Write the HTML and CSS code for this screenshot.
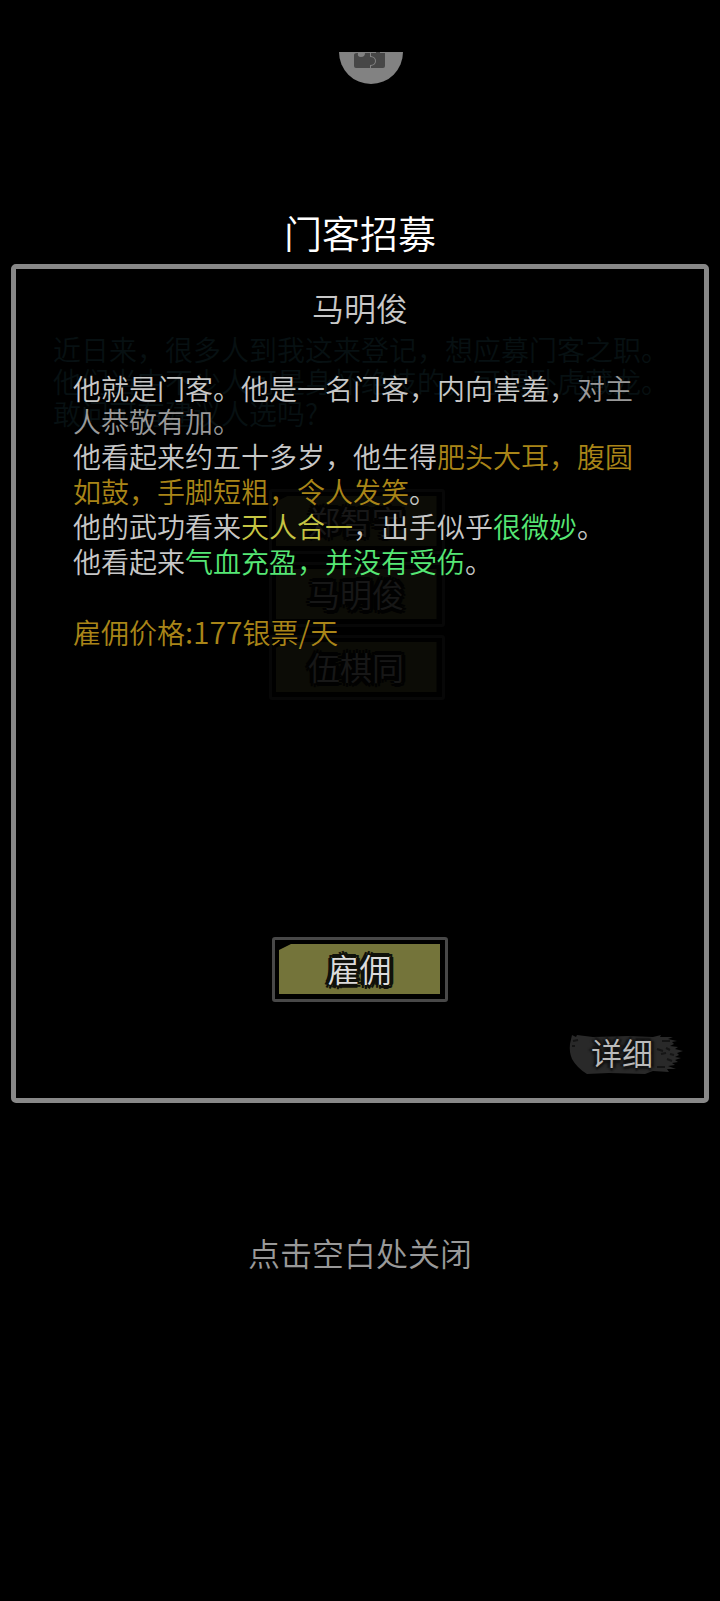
FILE: index.html
```html
<!DOCTYPE html>
<html lang="zh-CN">
<head>
<meta charset="utf-8">
<meta name="viewport" content="width=device-width, initial-scale=1">
<title>门客招募</title>
<link rel="stylesheet" href="styles.css">
</head>
<body>
<main class="screen">
  <svg class="badge" viewBox="0 0 64 32" aria-hidden="true">
    <path d="M0 0H64A32 32 0 0 1 0 0Z" fill="#828282"/>
    <path d="M15 3Q15 1 18 1H19Q18 5 22 5T26 1H31V5Q36 5 36 9T31 13V16H17Q15 16 15 14Z" fill="#474747"/>
    <path d="M32 1H37V0H41V1H46V14Q46 16 44 16H32V14Q37 13 37 9T32 4Z" fill="#474747"/>
  </svg>
  <h1 class="title">门客招募</h1>
  <section class="panel">
    <div class="backdrop" aria-hidden="true">
      <p class="rumor">近日来，很多人到我这来登记，想应募门客之职。<br>他们当中不少人可是身怀绝技的，可谓卧虎藏龙。<br>敢问可有建议人选吗?</p>
      <div class="candidates">
        <span class="plate"><span class="plate-face">郑智宇</span></span>
        <span class="plate"><span class="plate-face">马明俊</span></span>
        <span class="plate"><span class="plate-face">伍棋同</span></span>
      </div>
    </div>
    <h2 class="name">马明俊</h2>
    <div class="story">
      <p class="intro">他就是门客。他是一名门客，内向害羞，<span class="dim">对主<br>人恭敬有加。</span></p>
      <p>他看起来约五十多岁，他生得<span class="gold">肥头大耳，腹圆<br>如鼓，手脚短粗，令人发笑</span>。</p>
      <p>他的武功看来<span class="yellow">天人合一</span>，出手似乎<span class="green">很微妙</span>。</p>
      <p>他看起来<span class="green">气血充盈，并没有受伤</span>。</p>
      <p class="price gold">雇佣价格<span class="figure">:177</span>银票<span class="figure">/</span>天</p>
    </div>
    <button class="plate hire" type="button"><span class="plate-face">雇佣</span></button>
    <button class="detail" type="button">
      <svg class="brush" viewBox="0 0 116 42" preserveAspectRatio="none" aria-hidden="true">
        <path d="M3 1L7 3L8 1L24 3L60 2L84 3L92 1L91 3L104 3L99 5L108 7L103 8L105 10L101 12L109 13L106 15L114 17L108 19L110 21L106 23L112 24L106 26L109 28L103 29L106 31L99 32L107 35L98 35L100 38L84 37L76 40L40 39L18 40Q8 34 3 25Q0 18 1 10Z" fill="#292929"/>
        <path d="M88 15L94 17M97 14L101 16M92 20L97 19M101 20L105 21M93 7H101M98 25L103 27M88 33L96 33M4 7L9 6M3 12H6" stroke="#151515" stroke-width="2" fill="none"/>
      </svg>
      <span class="detail-text">详细</span>
    </button>
  </section>
  <button class="close" type="button">点击空白处关闭</button>
</main>
</body>
</html>
```
FILE: styles.css
```css
* { box-sizing: border-box; margin: 0; padding: 0; }
body {
  background: #000;
  color: #c8c8c8;
  font-family: "Noto Sans CJK SC", sans-serif;
  font-weight: 350;
}
button { border: 0; background: none; color: inherit; font: inherit; cursor: pointer; }
.screen {
  display: flex;
  flex-direction: column;
  align-items: center;
  min-height: 100vh;
  padding: 52px 11px 0;
}
.badge { width: 64px; height: 32px; margin-left: 22px; }
.title { margin-top: 120px; color: #fff; font-size: 38px; line-height: 56px; font-weight: inherit; }
.panel {
  position: relative;
  display: flex;
  flex-direction: column;
  align-items: center;
  width: 100%;
  min-height: 839px;
  margin-top: 4px;
  padding: 14px 19px 22px 57px;
  border: 5px solid #888;
  border-radius: 5px;
}
.name { margin-right: 38px; font-size: 32px; line-height: 48px; font-weight: inherit; }
.backdrop { position: absolute; inset: 64px 44px auto 37px; }
.rumor { color: #071012; font-size: 28px; line-height: 32px; white-space: nowrap; }
.candidates {
  display: flex;
  flex-direction: column;
  align-items: center;
  gap: 8px;
  margin-top: 60px;
  opacity: .1;
}
.plate {
  display: block;
  width: 176px;
  height: 65px;
  padding: 4px 5px 5px 4px;
  border: 3px solid #484848;
  border-radius: 3px;
  font-size: 32px;
  line-height: 48px;
}
.plate-face {
  display: block;
  height: 100%;
  background: #74743a;
  clip-path: polygon(12px 0, 100% 0, 100% 100%, 0 100%, 0 6px);
  color: #dcdcdc;
  text-align: center;
  text-shadow:
    4px 0 #10110a, -4px 0 #10110a, 0 4px #10110a, 0 -4px #10110a,
    3px 3px #10110a, -3px 3px #10110a, 3px -3px #10110a, -3px -3px #10110a,
    2px 0 #10110a, -2px 0 #10110a, 0 2px #10110a, 0 -2px #10110a;
}
.story { position: relative; align-self: stretch; margin-top: 41px; font-size: 28px; line-height: 35px; white-space: nowrap; }
.intro { padding-bottom: 1px; line-height: 33px; }
.dim { color: #999; }
.gold { color: #a98518; }
.yellow { color: #c5c443; }
.green { color: #56e775; }
.price { margin-top: 36px; }
.figure { font-size: 30px; line-height: 1; }
.hire { margin: auto 38px 32px 0; }
.detail { position: relative; align-self: flex-end; width: 116px; height: 42px; padding: 0 10px 7px 0; }
.brush { position: absolute; inset: 0; width: 100%; height: 100%; }
.detail-text {
  position: relative;
  display: block;
  color: #bbb;
  font-size: 31px;
  line-height: 35px;
  text-shadow: 3px 0 2px #111, -3px 0 2px #111, 0 3px 2px #111, 0 -3px 2px #111;
}
.close { margin-top: 125px; color: #999; font-size: 32px; line-height: 48px; }
```
